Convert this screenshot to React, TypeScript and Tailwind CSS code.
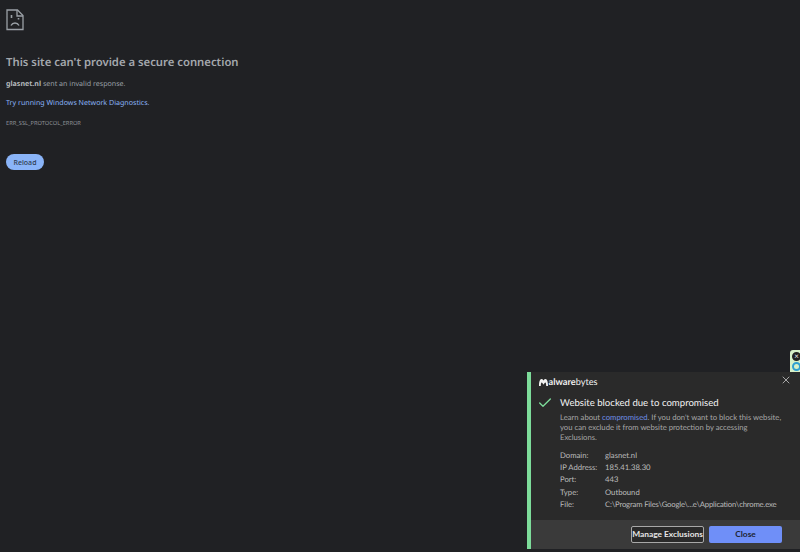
import { X, Check } from "lucide-react";

function SadPage() {
  return (
    <svg width="18" height="22" viewBox="0 0 18 22" fill="none" stroke="#9aa0a6" strokeWidth="1.3" className="block">
      <path d="M1 1h10.500L17 6.500V20.500H1z" />
      <path d="M11 1v6h6" />
      <path d="M5.500 6v3M12.500 9v1.500" strokeWidth="1.6" />
      <path d="M5 16.500c1-1.800 2.400-2.400 4-2.400s3 .6 4 2.400" strokeWidth="1.5" />
    </svg>
  );
}

const details = [
  ["Domain:", "glasnet.nl"],
  ["IP Address:", "185.41.38.30"],
  ["Port:", "443"],
  ["Type:", "Outbound"],
  ["File:", "C:\\Program Files\\Google\\...e\\Application\\chrome.exe"],
];

function MalwarebytesPopup() {
  return (
    <div className="absolute left-[527px] top-[372px] w-[273px] h-[177px] flex flex-col bg-[#2a2a2a] border-l-[4px] border-[#7ddc9a] font-['Lato',sans-serif]">
      <div className="flex items-center justify-between pl-[8px] pr-[8px] pt-[1px] h-[19px]">
        <div className="flex items-center text-[9.200px] leading-none text-[#f1f1f1]">
          <svg width="9" height="8" viewBox="0 0 9 8" fill="#f1f1f1" className="mr-[0.5px]">
            <path d="M0 8c0-4 .8-7 2.500-7 .9 0 1.500.7 2 1.600C5 1.700 5.600 1 6.500 1 8.200 1 9 4 9 8H7.200c0-1.700-.3-3.500-.9-3.500-.5 0-1 1-1.800 2.200C3.700 5.500 3.200 4.500 2.700 4.500c-.6 0-.9 1.800-.9 3.500z" />
          </svg>
          <span className="font-bold">alware</span>
          <span>bytes</span>
        </div>
        <X size={12} strokeWidth={1.5} className="text-[#d0d0d0] -mt-[5px]" />
      </div>
      <div className="flex flex-1 pl-[7px] pr-[8px] pt-[5px]">
        <Check size={16} strokeWidth={2} className="text-[#7ddc9a] -mt-[1px] shrink-0 -ml-[1px] mr-[7px]" />
        <div className="flex flex-col">
          <h2 className="text-[9.600px] leading-[16px] text-[#f2f2f2]">Website blocked due to compromised</h2>
          <p className="text-[7.700px] leading-[10px] whitespace-nowrap text-[#a8a8a8]">
            Learn about <span className="text-[#6f8fe8]">compromised</span>. If you don't want to block this website,<br />you can exclude it from website protection by accessing<br />Exclusions.
          </p>
          <dl className="mt-[7px] flex flex-col text-[7.700px] leading-[12.200px] text-[#bdbdbd]">
            {details.map(([label, value]) => (
              <div key={label} className="flex">
                <dt className="w-[45px] shrink-0">{label}</dt>
                <dd className={label === "File:" ? "whitespace-nowrap tracking-[-0.16px]" : "whitespace-nowrap"}>{value}</dd>
              </div>
            ))}
          </dl>
        </div>
      </div>
      <div className="h-[29px] shrink-0 bg-[#3a3a3a] flex items-center justify-end gap-[5px] pr-[18px]">
        <button className="h-[17px] w-[73px] rounded-[2px] border border-[#a8a8a8] bg-[#2a2a2a] text-[8.400px] font-bold leading-none whitespace-nowrap text-[#e6e6e6]">
          Manage Exclusions
        </button>
        <button className="h-[17px] w-[73px] rounded-[2px] bg-[#6f8ff8] text-[8.400px] font-bold leading-none text-[#1d2433]">
          Close
        </button>
      </div>
    </div>
  );
}

export default function App() {
  return (
    <div className="relative w-[800px] h-[552px] overflow-hidden bg-[#202124] font-['Noto_Sans',sans-serif] text-[#9aa0a6] [text-rendering:geometricPrecision]">
      <main className="flex flex-col items-start pl-[6px] pt-[9px]">
        <SadPage />
        <h1 className="mt-[23px] text-[11.300px] leading-[18px] font-semibold text-[#a4a8ad]">This site can't provide a secure connection</h1>
        <p className="mt-[7px] text-[7.100px] leading-[11px]">
          <span className="font-bold text-[#b4b8bc]">glasnet.nl</span> sent an invalid response.
        </p>
        <a className="mt-[8px] text-[7.100px] leading-[11px] text-[#8ab4f8]">Try running Windows Network Diagnostics.</a>
        <div className="mt-[10px] text-[5.700px] leading-[9px] text-[#8f9398]">ERR_SSL_PROTOCOL_ERROR</div>
        <button className="mt-[26px] h-[16px] w-[38px] rounded-full bg-[#8ab4f8] text-[7px] font-medium leading-none text-[#2c3a4f]">Reload</button>
      </main>

      <div className="absolute left-[790px] top-[350px] w-[14px] h-[24px] rounded-tl-[3px] bg-[#d7f0c8] pl-[2px] pt-[2px] flex flex-col gap-[1px]">
        <div className="w-[9px] h-[9px] rounded-full bg-[#222] text-[#eee] text-[8px] leading-[9px] text-center">×</div>
        <div className="w-[9px] h-[9px] rounded-full border-2 border-[#2f9fd0]" />
      </div>
      <MalwarebytesPopup />
    </div>
  );
}
